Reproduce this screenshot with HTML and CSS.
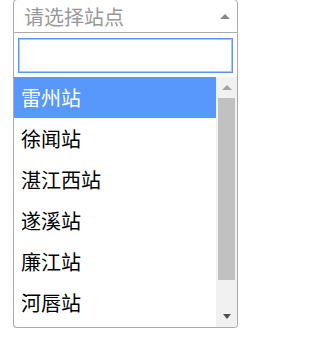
FILE: index.html
```html
<!DOCTYPE html>
<html lang="zh">
<head>
<meta charset="utf-8">
<link rel="stylesheet" href="styles.css">
</head>
<body>
<div class="select">
  <div class="selection">
    <span class="placeholder">请选择站点</span>
    <span class="arrow"></span>
  </div>
  <div class="dropdown">
    <div class="search"><input class="search-field" type="text"></div>
    <div class="results">
      <ul class="options">
        <li class="option highlighted">雷州站</li>
        <li class="option">徐闻站</li>
        <li class="option">湛江西站</li>
        <li class="option">遂溪站</li>
        <li class="option">廉江站</li>
        <li class="option">河唇站</li>
      </ul>
      <div class="scrollbar">
        <div class="sb-btn"><span class="sb-up"></span></div>
        <div class="sb-thumb"></div>
        <div class="sb-fill"></div>
        <div class="sb-btn"><span class="sb-down"></span></div>
      </div>
    </div>
  </div>
</div>
</body>
</html>
```
FILE: styles.css
```css
html, body {
  margin: 0;
  padding: 0;
  background: #fff;
}
body {
  padding-left: 13px;
  font-family: "Noto Sans CJK SC", "Noto Sans", sans-serif;
}
.select {
  width: 225px;
  margin-top: -1px;
}
.selection {
  box-sizing: border-box;
  height: 34px;
  border: 1px solid #aaa;
  border-radius: 4px 4px 0 0;
  display: flex;
  align-items: center;
  padding: 0 7px 0 10px;
}
.placeholder {
  flex: 1;
  color: #999;
  font-size: 20px;
  line-height: 29px;
}
.arrow {
  width: 0;
  height: 0;
  border-style: solid;
  border-width: 0 5px 5px 5px;
  border-color: transparent transparent #888 transparent;
  margin-right: 0;
  margin-top: 1px;
}
.dropdown {
  border: 1px solid #aaa;
  border-top: none;
  border-radius: 0 0 4px 4px;
  overflow: hidden;
}
.search {
  padding: 5px 4px 4px 4px;
}
.search-field {
  display: block;
  box-sizing: border-box;
  width: 100%;
  height: 35px;
  margin: 0;
  border: 1px solid #5b94f5;
  box-shadow: inset 0 0 0 1px #a9c7fa;
  border-radius: 0;
  outline: none;
  background: #fff;
}
.results {
  display: flex;
  height: 250px;
}
.options {
  flex: 1;
  list-style: none;
  margin: 0;
  padding: 0;
  overflow: hidden;
}
.option {
  font-size: 20px;
  line-height: 29px;
  padding: 6px 7px;
  color: #000;
}
.option.highlighted {
  background: #5897fb;
  color: #fff;
}
.scrollbar {
  width: 21px;
  background: #f1f1f1;
  display: flex;
  flex-direction: column;
  align-items: center;
}
.sb-btn {
  height: 21px;
  width: 21px;
  display: flex;
  align-items: center;
  justify-content: center;
}
.sb-up {
  width: 0;
  height: 0;
  border-style: solid;
  border-width: 0 5px 5px 5px;
  border-color: transparent transparent #a3a3a3 transparent;
}
.sb-down {
  width: 0;
  height: 0;
  border-style: solid;
  border-width: 5px 4px 0 4px;
  border-color: #505050 transparent transparent transparent;
}
.sb-thumb {
  width: 17px;
  height: 182px;
  margin-top: 0;
  background: #c1c1c1;
}
.sb-fill {
  flex: 1;
}
```
